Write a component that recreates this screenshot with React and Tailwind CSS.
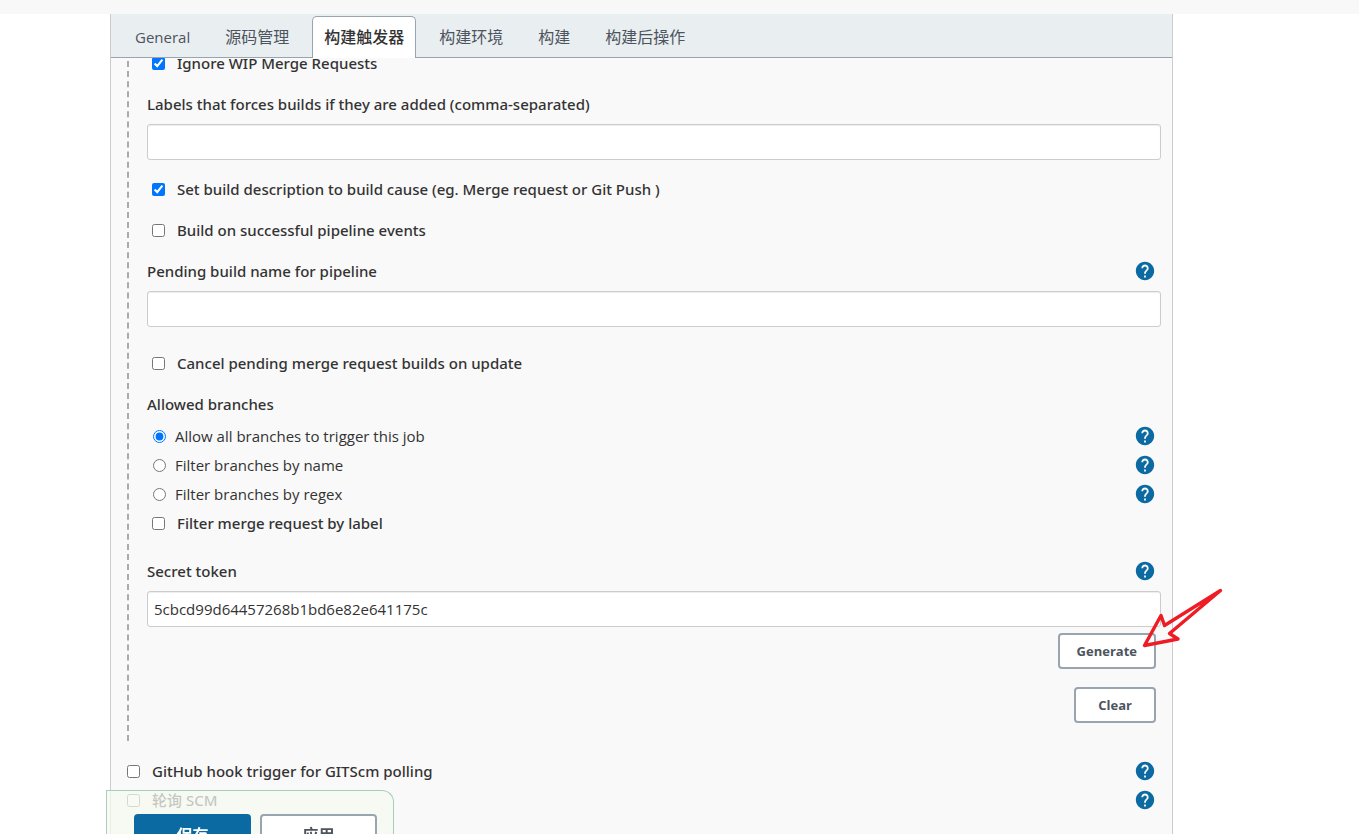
import React, { useState } from 'react';
import { MdHelp } from 'react-icons/md';

const tabs = ['General', '源码管理', '构建触发器', '构建环境', '构建', '构建后操作'];

const branchOptions = [
  { value: 'all', label: 'Allow all branches to trigger this job' },
  { value: 'name', label: 'Filter branches by name' },
  { value: 'regex', label: 'Filter branches by regex' },
];

const labelStyle = "font-['Noto_Sans','Noto_Sans_CJK_SC',sans-serif] font-medium";

const outlineButton = 'rounded-[4px] border-2 border-[#98a4ae] bg-white font-bold text-[#4d545d]';

const HelpButton = ({ topic }) => (
  <button type="button" aria-label={`Help: ${topic}`} className="mr-[5px] text-[#0b6aa2]">
    <MdHelp size={22} />
  </button>
);

const CheckRow = ({ id, label, defaultChecked, help, className = 'pl-[5px]' }) => (
  <div className={`flex h-6 items-center justify-between ${className}`}>
    <div className="flex items-center gap-3">
      <input id={id} type="checkbox" defaultChecked={defaultChecked} className="size-[13px]" />
      <label htmlFor={id} className={labelStyle}>{label}</label>
    </div>
    {help && <HelpButton topic={label} />}
  </div>
);

const TextField = ({ id, label, defaultValue, help }) => (
  <div className="flex flex-col gap-2">
    <div className="flex h-6 items-center justify-between">
      <label htmlFor={id} className={labelStyle}>{label}</label>
      {help && <HelpButton topic={label} />}
    </div>
    <input
      id={id}
      type="text"
      defaultValue={defaultValue}
      className="h-9 w-full rounded-[3px] border border-[#ccc] bg-white px-1.5 shadow-[inset_0_1px_1px_rgba(0,0,0,0.075)]"
    />
  </div>
);

const App = () => {
  const [activeTab, setActiveTab] = useState('构建触发器');
  const [branchFilter, setBranchFilter] = useState('all');

  return (
    <div className="flex min-h-screen flex-col bg-white font-['Open_Sans','Noto_Sans_CJK_SC',sans-serif] text-[15px] leading-6 text-[#333]">
      <div className="h-3.5 bg-[#f8f8f8]" />

      <main className="mr-[186px] ml-[110px] flex-1 border-x border-[#ccc] bg-[#f9f9f9]">
        {/* Section tabs stay on top while the form scrolls under them */}
        <nav className="sticky top-0 z-10 flex h-11 items-end gap-[11px] border-b border-[#98a4ae] bg-[#e9eef1] pl-3">
          {tabs.map((tab) => (
            <button
              key={tab}
              type="button"
              onClick={() => setActiveTab(tab)}
              className={`${tab === 'General' ? 'text-[15px]' : 'text-base'} ${
                tab === activeTab
                  ? '-mb-px h-[42px] rounded-t-[5px] border border-b-0 border-[#98a4ae] bg-white px-[11px] pb-0.5 font-medium text-[#333]'
                  : 'h-[41px] px-3 text-[#4d545d]'
              }`}
            >
              {tab}
            </button>
          ))}
        </nav>

        <form className="-mt-[7px] pr-[11px] pb-5 pl-4" onSubmit={(e) => e.preventDefault()}>
          <div className="border-l-2 border-dashed border-[#aaa] pb-[18px] pl-[18px]">
            <div className="flex flex-col gap-[17px]">
              <CheckRow id="ignoreWip" label="Ignore WIP Merge Requests" defaultChecked />
              <TextField id="forceLabels" label="Labels that forces builds if they are added (comma-separated)" />
              <CheckRow id="buildDescription" label="Set build description to build cause (eg. Merge request or Git Push )" defaultChecked />
              <CheckRow id="pipelineEvents" label="Build on successful pipeline events" />
              <TextField id="pendingBuild" label="Pending build name for pipeline" help />
            </div>

            <div className="mt-6">
              <CheckRow id="cancelPending" label="Cancel pending merge request builds on update" />
            </div>

            <fieldset className="mt-[17px]">
              <legend className={labelStyle}>Allowed branches</legend>
              <div className="mt-2 flex flex-col gap-[5px]">
                {branchOptions.map((option) => (
                  <div key={option.value} className="flex h-6 items-center justify-between pl-1.5">
                    <div className="flex items-center gap-[9px]">
                      <input
                        id={option.value}
                        type="radio"
                        name="branchFilter"
                        checked={branchFilter === option.value}
                        onChange={() => setBranchFilter(option.value)}
                        className="size-[13px]"
                      />
                      <label htmlFor={option.value}>{option.label}</label>
                    </div>
                    <HelpButton topic={option.label} />
                  </div>
                ))}
                <CheckRow id="filterByLabel" label="Filter merge request by label" />
              </div>
            </fieldset>

            <div className="mt-6">
              <TextField id="secretToken" label="Secret token" defaultValue="5cbcd99d64457268b1bd6e82e641175c" help />
            </div>

            <div className="mt-1.5 mr-[5px] flex flex-col items-end gap-[18px] text-[13px]">
              <div className="relative">
                <button type="button" className={`h-9 px-[17px] ${outlineButton}`}>Generate</button>
                {/* Arrow pointing at the button */}
                <svg className="pointer-events-none absolute -top-[45px] -right-[68px]" width="82" height="60" viewBox="0 0 82 60" fill="none" aria-hidden="true">
                  <path
                    d="M78.5 2.5 22.5 37.5 19 27.5 2.5 57.5 36 51 27.5 45.5Z"
                    stroke="#ee1c25"
                    strokeWidth="3.4"
                    strokeLinejoin="round"
                  />
                </svg>
              </div>
              <button type="button" className={`h-9 px-[22px] ${outlineButton}`}>Clear</button>
            </div>
          </div>

          <div className="mt-[18px] flex flex-col gap-[5px]">
            <CheckRow id="githubHook" label="GitHub hook trigger for GITScm polling" help className="pl-0" />
            <CheckRow id="pollScm" label="轮询 SCM" help className="pl-0" />
          </div>
        </form>
      </main>

      {/* Save bar, partly below the fold */}
      <div className="fixed -bottom-7 left-[106px] z-20 flex h-[72px] gap-[9px] rounded-tr-[12px] border border-b-0 border-[#a9cdb8] bg-[#f6faf0]/75 pt-[23px] pr-4 pl-[27px] text-base">
        <button type="button" className="h-[42px] w-[117px] rounded-[4px] bg-[#0b6aa2] font-bold text-white">保存</button>
        <button type="button" className={`h-[42px] w-[117px] ${outlineButton}`}>应用</button>
      </div>
    </div>
  );
};

export default App;
